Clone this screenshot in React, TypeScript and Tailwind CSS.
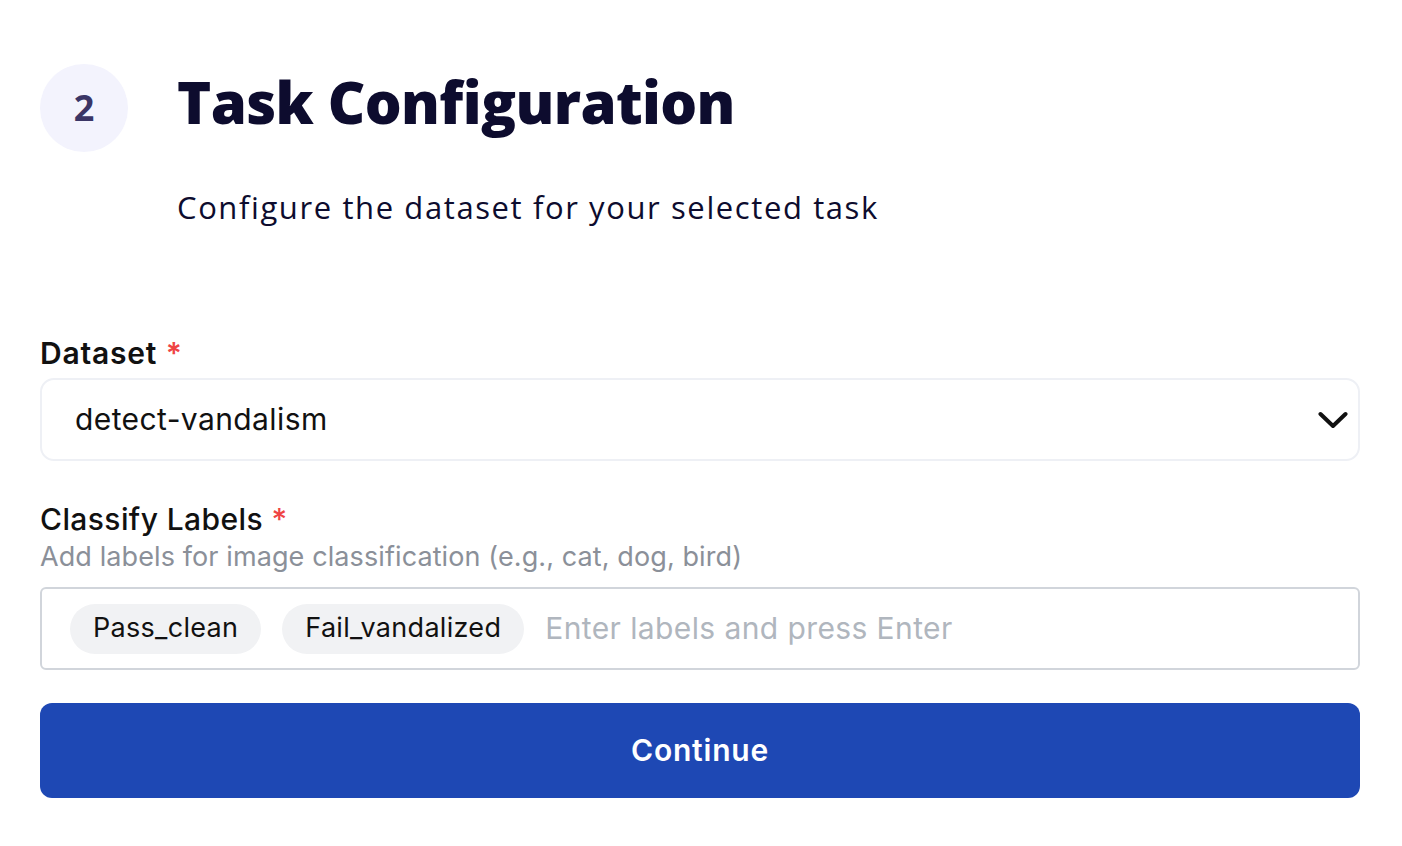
export default function App() {
  const labels = ["Pass_clean", "Fail_vandalized"];

  return (
    <div className="min-h-screen bg-white px-10 pt-16 font-['Inter',sans-serif]">
      {/* Step header */}
      <div className="flex items-start gap-[49px]">
        <div className="flex h-[88px] w-[88px] shrink-0 items-center justify-center rounded-full bg-[#f3f3fd]">
          <span className="font-['Open_Sans',sans-serif] text-[36px] font-bold text-[#3a3566]">2</span>
        </div>
        <div className="pt-[2px]">
          <h1 className="font-['Open_Sans',sans-serif] text-[58px] leading-[72px] font-extrabold tracking-[-0.6px] text-[#0d0c2e]">
            Task Configuration
          </h1>
          <p className="mt-[49px] font-['Open_Sans',sans-serif] text-[31px] leading-[40px] tracking-[1.6px] text-[#0d0c2e]">
            Configure the dataset for your selected task
          </p>
        </div>
      </div>

      {/* Form */}
      <div className="mt-[108px] w-[1320px]">
        <label className="block text-[30px] leading-[36px] font-semibold tracking-[0.8px] text-[#111]">
          Dataset <span className="text-[#ef4444]">*</span>
        </label>
        <div className="mt-[7px] flex h-[83px] items-center justify-between rounded-[14px] border-2 border-[#eef0f5] pl-[33px] pr-[10px]">
          <span className="text-[30px] tracking-[0.4px] text-[#111]">detect-vandalism</span>
          <svg width="30" height="18" viewBox="0 0 30 18" fill="none" className="text-[#111]">
            <polyline points="2.5,3 15,15 27.5,3" stroke="currentColor" strokeWidth="4" strokeLinecap="round" strokeLinejoin="round" />
          </svg>
        </div>

        <label className="mt-[40px] block text-[30px] leading-[36px] font-medium tracking-[0.4px] text-[#111]">
          Classify Labels <span className="text-[#ef4444]">*</span>
        </label>
        <p className="mt-[4px] text-[27px] leading-[32px] tracking-[0.1px] text-[#8b9099]">
          Add labels for image classification (e.g., cat, dog, bird)
        </p>
        <div className="mt-[14px] flex h-[83px] items-center gap-[21px] rounded-[6px] border-2 border-[#d1d5db] pl-[28px]">
          {labels.map((l) => (
            <span
              key={l}
              className="flex h-[50px] items-center rounded-full bg-[#f1f2f4] px-[23px] text-[27px] tracking-[0.3px] text-[#111]"
            >
              {l}
            </span>
          ))}
          <span className="text-[30px] tracking-[0.4px] text-[#b0b6be]">Enter labels and press Enter</span>
        </div>

        <button className="mt-[33px] flex h-[95px] w-full items-center justify-center rounded-[12px] bg-[#1e48b4] text-[30px] font-semibold tracking-[0.8px] text-white">
          Continue
        </button>
      </div>
    </div>
  );
}
